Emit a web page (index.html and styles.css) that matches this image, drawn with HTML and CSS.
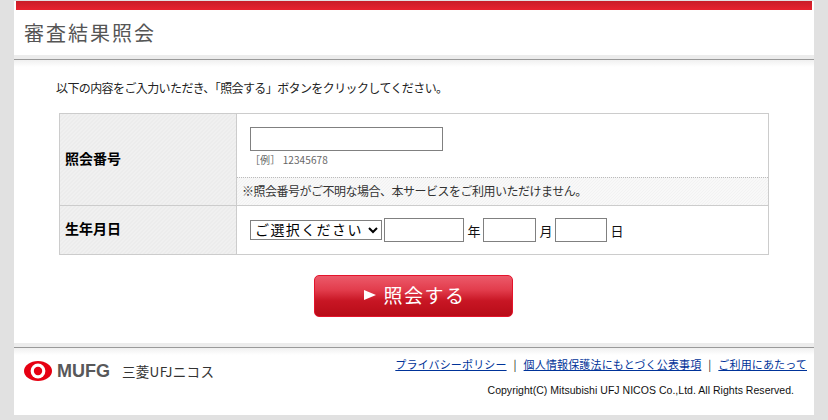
FILE: index.html
```html
<!DOCTYPE html>
<html lang="ja">
<head>
<meta charset="utf-8">
<title>審査結果照会</title>
<link rel="stylesheet" href="styles.css">
</head>
<body>
<div class="page">
  <div class="redbar"></div>
  <h1 class="title">審査結果照会</h1>
  <div class="rule"></div>
  <main class="content">
    <p class="lead">以下の内容をご入力いただき、「照会する」ボタンをクリックしてください。</p>
    <div class="form">
      <div class="label label-first">照会番号</div>
      <div class="value-first">
        <div class="number-area">
          <input class="field field-number" type="text">
          <div class="example">［例］ 12345678</div>
        </div>
        <div class="note">※照会番号がご不明な場合、本サービスをご利用いただけません。</div>
      </div>
      <div class="label">生年月日</div>
      <div class="value-second">
        <select class="era"><option>ご選択ください</option></select>
        <input class="field field-year" type="text"><span class="unit">年</span>
        <input class="field field-month" type="text"><span class="unit">月</span>
        <input class="field field-day" type="text"><span class="unit">日</span>
      </div>
    </div>
    <div class="actions">
      <button class="submit" type="button"><span class="arrow"></span>照会する</button>
    </div>
  </main>
  <div class="rule"></div>
  <footer class="footer">
    <div class="logo">
      <svg class="mark" width="28" height="20" viewBox="0 0 28 20"><ellipse cx="14" cy="10" rx="14" ry="10" fill="#e60012"/><circle cx="14" cy="10" r="7.4" fill="#fff"/><circle cx="14" cy="10" r="4.2" fill="#e60012"/></svg>
      <span class="mufg">MUFG</span>
      <span class="nicos">三菱UFJニコス</span>
    </div>
    <div class="footer-right">
      <nav class="links">
        <a href="#">プライバシーポリシー</a><span class="sep">|</span><a href="#">個人情報保護法にもとづく公表事項</a><span class="sep">|</span><a href="#">ご利用にあたって</a>
      </nav>
      <div class="copy">Copyright(C) Mitsubishi UFJ NICOS Co.,Ltd. All Rights Reserved.</div>
    </div>
  </footer>
</div>
</body>
</html>
```
FILE: styles.css
```css
* { box-sizing: border-box; }
html, body { margin: 0; padding: 0; }
body {
  height: 420px;
  overflow: hidden;
  padding-top: 1px;
  background: #e1e1e1;
  font-family: "Noto Sans CJK JP", "Liberation Sans", sans-serif;
  color: #000;
}
.page {
  width: 800px;
  height: 414px;
  margin-left: 14px;
  background: #fff;
}
.redbar {
  height: 9px;
  margin: 0 2px;
  background: linear-gradient(#c81e28, #e8222e);
}
.title {
  height: 45px;
  margin: 0;
  padding: 8px 0 0 10px;
  font-size: 20px;
  line-height: 30px;
  font-weight: 400;
  letter-spacing: 2px;
  color: #555;
}
.rule {
  height: 12px;
  background: linear-gradient(#ececec 0 4px, #999 4px 5px, #f0f0f0 5px, #fff 100%);
}
.content { height: 276px; padding-top: 11px; }
.lead {
  margin: 0 0 0 42px;
  font-size: 12px;
  line-height: 20px;
  color: #222;
  letter-spacing: -0.6px;
}
.form {
  display: grid;
  grid-template-columns: 177px 531px;
  grid-template-rows: 92px 48px;
  width: 710px;
  margin: 15px 0 0 45px;
  border: 1px solid #ccc;
}
.label {
  display: flex;
  align-items: center;
  padding: 0 0 4px 5px;
  font-size: 14px;
  font-weight: 700;
  background: linear-gradient(135deg, #f0f0f0 25%, #ececec 25% 50%, #f0f0f0 50% 75%, #ececec 75%) 0 0 / 4px 4px;
  border-right: 1px solid #ccc;
}
.label-first { border-bottom: 1px solid #ccc; }
.value-first { display: flex; flex-direction: column; border-bottom: 1px solid #ccc; }
.number-area { height: 63px; padding: 13px 0 0 13px; }
.field {
  height: 24px;
  padding: 0;
  border: 1px solid #808080;
  border-radius: 0;
  background: #fff;
  outline: none;
  display: block;
}
.field-number { width: 193px; }
.example {
  margin-top: 2px;
  font-family: "Noto Sans CJK JP", sans-serif;
  font-size: 10px;
  line-height: 14px;
  letter-spacing: .1px;
  color: #666;
}
.note {
  flex: 1;
  padding-left: 5px;
  border-top: 1px dotted #bbb;
  background: linear-gradient(135deg, #f8f8f8 25%, #f2f2f2 25% 50%, #f8f8f8 50% 75%, #f2f2f2 75%) 0 0 / 3px 3px;
  font-size: 12px;
  line-height: 25px;
  color: #333;
  letter-spacing: -0.5px;
}
.value-second {
  display: flex;
  align-items: center;
  padding-left: 13px;
}
.era {
  width: 132px;
  height: 20px;
  margin-right: 2px;
  padding: 0;
  border: 1px solid #808080;
  border-radius: 0;
  background: #fff;
  font-family: "Liberation Sans", "Noto Sans CJK JP", sans-serif;
  font-size: 14px;
  letter-spacing: 1.4px;
  color: #000;
}
.field-year { width: 80px; }
.field-month { width: 53px; }
.field-day { width: 52px; }
.unit {
  width: 19px;
  padding-left: 1px;
  text-align: center;
  font-size: 13px;
  color: #111;
}
.actions { display: flex; justify-content: center; margin-top: 20px; padding-right: 1px; }
.submit {
  display: flex;
  align-items: center;
  justify-content: center;
  width: 199px;
  height: 42px;
  padding: 0 0 3px 3px;
  border: 1.5px solid #e4142c;
  border-radius: 5px;
  background: linear-gradient(#ec5a6a 0, #e23c4c 35%, #c81624 62%, #b80c18 100%);
  color: #fff;
  font-family: "Noto Sans CJK JP", sans-serif;
  font-size: 19px;
  letter-spacing: 1.5px;
}
.arrow {
  width: 0;
  height: 0;
  margin-right: 7px;
  border-left: 12px solid #fff;
  border-top: 5px solid transparent;
  border-bottom: 5px solid transparent;
}
.footer {
  display: flex;
  justify-content: space-between;
  height: 56px;
}
.logo { display: flex; align-items: center; height: 32px; padding-left: 10px; }
.mark { display: block; }
.mufg {
  margin-left: 5px;
  font-family: "Liberation Sans", sans-serif;
  font-size: 18px;
  font-weight: 700;
  color: #58585a;
}
.nicos {
  margin-left: 12px;
  font-size: 13.5px;
  color: #333;
  letter-spacing: .3px;
}
.footer-right { width: 500px; padding-right: 7px; }
.links {
  display: flex;
  justify-content: flex-end;
  font-size: 11px;
  line-height: 18px;
  white-space: nowrap;
  letter-spacing: .15px;
}
.links a { color: #003399; }
.sep { width: 17px; text-align: center; color: #222; }
.copy {
  margin-top: 10px;
  padding-right: 13px;
  text-align: right;
  font-family: "Liberation Sans", sans-serif;
  font-size: 10.5px;
  line-height: 14px;
  letter-spacing: .03px;
  color: #111;
}
```
